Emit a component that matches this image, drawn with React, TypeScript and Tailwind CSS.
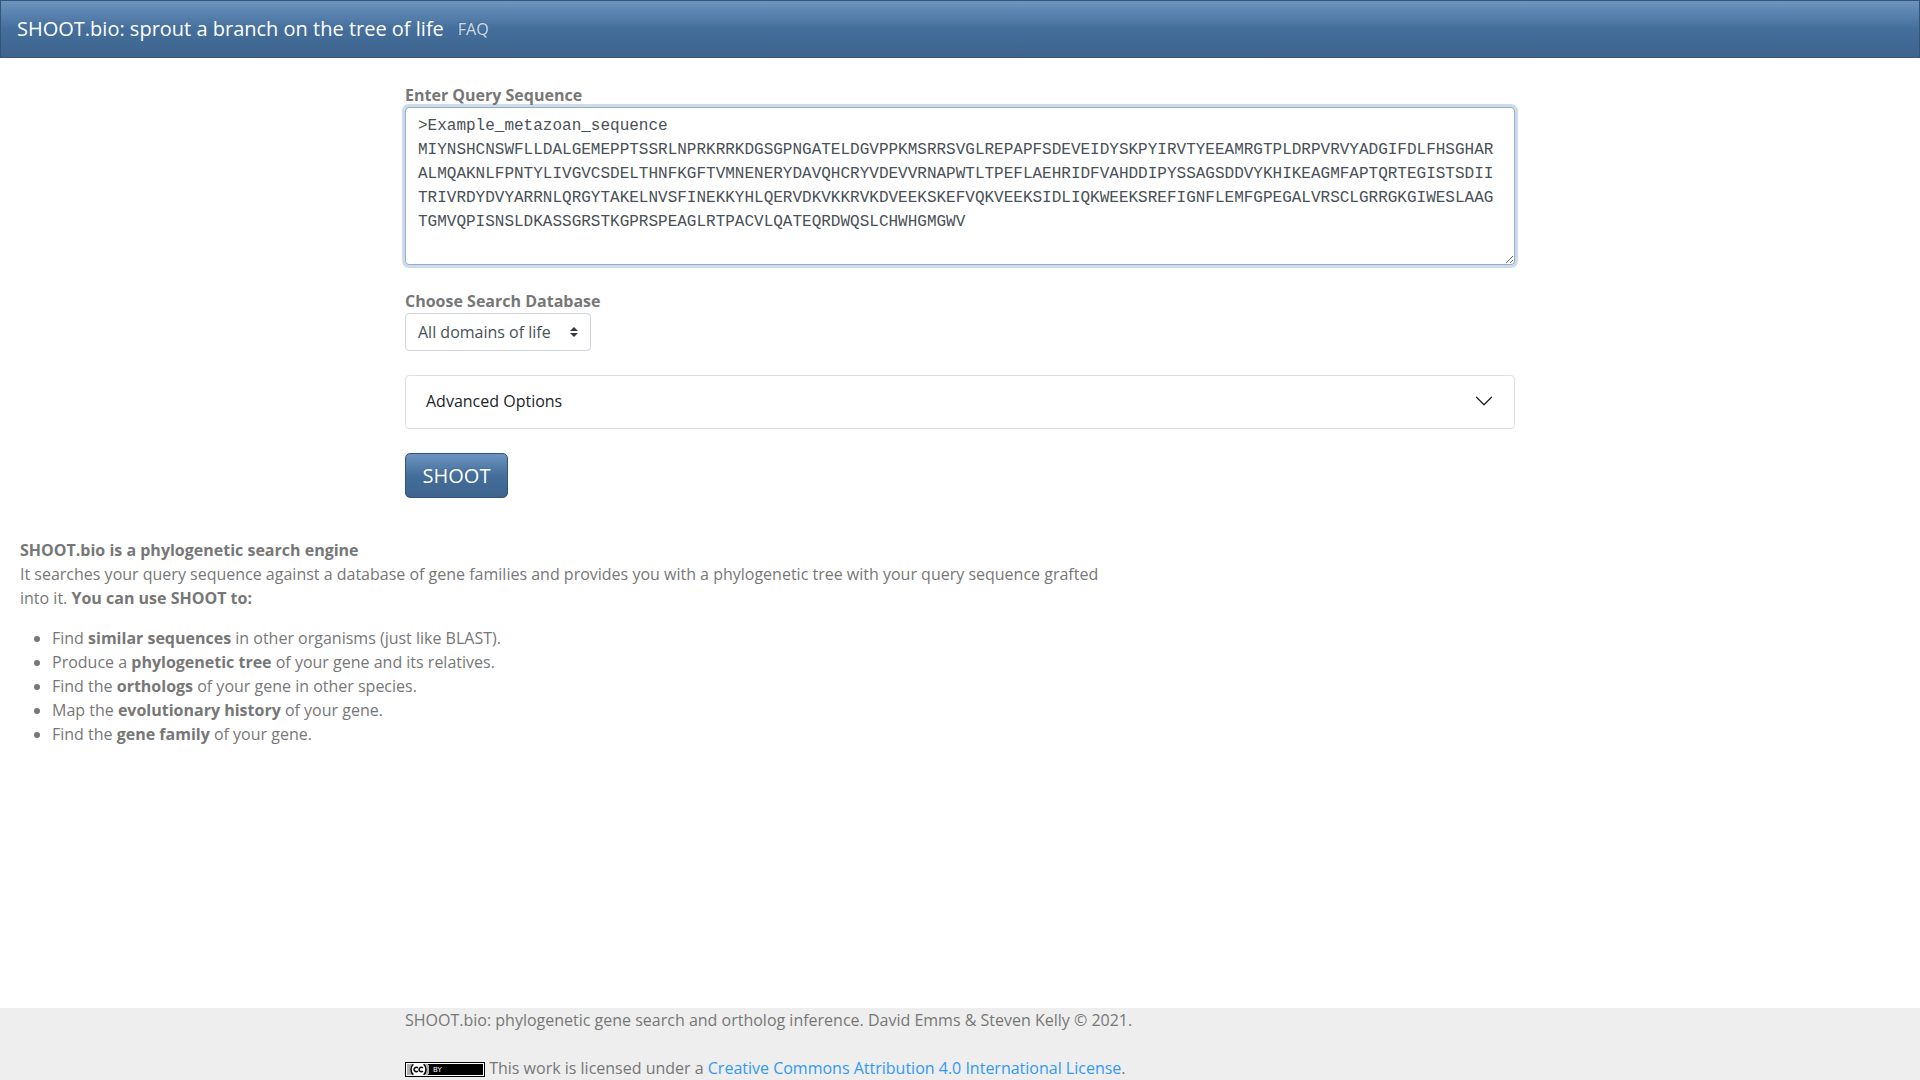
import React, { useState } from "react";

const EXAMPLE_SEQUENCE = `>Example_metazoan_sequence
MIYNSHCNSWFLLDALGEMEPPTSSRLNPRKRRKDGSGPNGATELDGVPPKMSRRSVGLREPAPFSDEVEIDYSKPYIRVTYEEAMRGTPLDRPVRVYADGIFDLFHSGHAR
ALMQAKNLFPNTYLIVGVCSDELTHNFKGFTVMNENERYDAVQHCRYVDEVVRNAPWTLTPEFLAEHRIDFVAHDDIPYSSAGSDDVYKHIKEAGMFAPTQRTEGISTSDII
TRIVRDYDVYARRNLQRGYTAKELNVSFINEKKYHLQERVDKVKKRVKDVEEKSKEFVQKVEEKSIDLIQKWEEKSREFIGNFLEMFGPEGALVRSCLGRRGKGIWESLAAG
TGMVQPISNSLDKASSGRSTKGPRSPEAGLRTPACVLQATEQRDWQSLCHWHGMGWV`;

interface Use {
  before: string;
  term: string;
  after: string;
}

const USES: Use[] = [
  { before: "Find ", term: "similar sequences", after: " in other organisms (just like BLAST)." },
  { before: "Produce a ", term: "phylogenetic tree", after: " of your gene and its relatives." },
  { before: "Find the ", term: "orthologs", after: " of your gene in other species." },
  { before: "Map the ", term: "evolutionary history", after: " of your gene." },
  { before: "Find the ", term: "gene family", after: " of your gene." },
];

const NavBar: React.FC = () => (
  <nav className="flex h-[58px] items-center gap-[14px] border border-[#345578] bg-[linear-gradient(#6d94bf,#446e9b_50%,#3e648d)] px-4">
    <a href="#" className="text-xl leading-[30px] text-white">
      SHOOT.bio: sprout a branch on the tree of life
    </a>
    <a href="#faq" className="text-white/75 [text-shadow:-1px_-1px_0_rgba(0,0,0,0.1)]">
      FAQ
    </a>
  </nav>
);

/** Small 80x15 "CC BY" licence button. */
const LicenceBadge: React.FC = () => (
  <svg
    width="80"
    height="15"
    viewBox="0 0 80 15"
    role="img"
    aria-label="Creative Commons License"
    className="inline-block align-middle"
    shapeRendering="crispEdges"
  >
    <rect width="80" height="15" fill="#000" />
    <rect x="1" y="1" width="78" height="13" fill="#fff" />
    <rect x="2" y="2" width="76" height="11" fill="#000" />
    <path d="M2 2h21q3 5.500 0 11H2z" fill="#aab2ab" />
    <g shapeRendering="auto">
      <path d="M8 2h10a8 8 0 0 1 0 11H8a8 8 0 0 1 0-11z" fill="#fff" />
      <path
        d="M8.300 2.300a7 7 0 0 0 0 10.400M18.700 2.300a7 7 0 0 1 0 10.400"
        fill="none"
        stroke="#000"
        strokeWidth="1.500"
      />
      <path
        d="M12.900 6a2.200 2.200 0 1 0 0 3M17.900 6a2.200 2.200 0 1 0 0 3"
        fill="none"
        stroke="#000"
        strokeWidth="1.500"
      />
    </g>
    <text x="28" y="10" fill="#fff" fontSize="7" fontFamily="DejaVu Sans, sans-serif">
      BY
    </text>
  </svg>
);

const QueryForm: React.FC = () => {
  const [sequence, setSequence] = useState(EXAMPLE_SEQUENCE);
  const [database, setDatabase] = useState("all");
  const [open, setOpen] = useState(false);

  return (
    <form
      className="mx-auto flex w-full max-w-[1140px] flex-col items-start gap-6 px-[15px] pt-[25px]"
      onSubmit={(e) => e.preventDefault()}
    >
      <div className="flex w-full flex-col">
        <label htmlFor="sequence" className="self-start font-bold">
          Enter Query Sequence
        </label>
        <textarea
          id="sequence"
          rows={6}
          spellCheck={false}
          value={sequence}
          onChange={(e) => setSequence(e.target.value)}
          className="w-full resize rounded border border-[#90afd0] bg-white px-3 py-1.5 font-['Liberation_Mono',monospace] text-[#495057] shadow-[0_0_0_3px_rgba(68,110,155,0.25)] outline-none"
        />
      </div>

      <div className="flex flex-col items-start">
        <label htmlFor="database" className="font-bold">
          Choose Search Database
        </label>
        <div className="relative">
          <select
            id="database"
            value={database}
            onChange={(e) => setDatabase(e.target.value)}
            className="h-[38px] w-[186px] appearance-none rounded border border-[#ced4da] bg-white pr-7 pl-3 text-[#495057]"
          >
            <option value="all">All domains of life</option>
          </select>
          <svg
            viewBox="0 0 4 5"
            className="pointer-events-none absolute top-[14px] right-[13px] h-[10px] w-2"
            aria-hidden="true"
          >
            <path fill="#343a40" d="M2 0L0 2h4zm0 5L0 3h4z" />
          </svg>
        </div>
      </div>

      <div className="w-full rounded border border-[#dfdfdf] bg-white">
        <button
          type="button"
          aria-expanded={open}
          onClick={() => setOpen(!open)}
          className="flex w-full items-center justify-between px-5 pt-[13px] pb-[15px] text-left text-[#212529]"
        >
          Advanced Options
          <svg viewBox="0 0 16 16" className="size-5" fill="#212529" aria-hidden="true">
            <path
              fillRule="evenodd"
              d="M1.646 4.646a.5.5 0 0 1 .708 0L8 10.293l5.646-5.647a.5.5 0 0 1 .708.708l-6 6a.5.5 0 0 1-.708 0l-6-6a.5.5 0 0 1 0-.708z"
            />
          </svg>
        </button>
      </div>

      <button
        type="submit"
        className="h-[45px] min-w-[103px] rounded-[5px] border border-[#345578] bg-[linear-gradient(#6d94bf,#446e9b_50%,#3e648d)] px-4 pt-px text-xl text-white [text-shadow:-1px_-1px_0_rgba(0,0,0,0.1)]"
      >
        SHOOT
      </button>
    </form>
  );
};

const About: React.FC = () => (
  <section className="max-w-[1150px] px-5 pt-10">
    <p>
      <strong>SHOOT.bio is a phylogenetic search engine</strong>
      <br />
      It searches your query sequence against a database of gene families and provides you with a
      phylogenetic tree with your query sequence grafted into it.{" "}
      <strong>You can use SHOOT to:</strong>
    </p>
    <ul className="mt-4 list-disc pl-8">
      {USES.map((use) => (
        <li key={use.term}>
          {use.before}
          <strong>{use.term}</strong>
          {use.after}
        </li>
      ))}
    </ul>
  </section>
);

const Footer: React.FC = () => (
  <footer className="mt-auto bg-[#eee]">
    <div className="mx-auto flex max-w-[1140px] flex-col gap-6 px-[15px]">
      <p>SHOOT.bio: phylogenetic gene search and ortholog inference. David Emms &amp; Steven Kelly © 2021.</p>
      <p>
        <LicenceBadge /> This work is licensed under a{" "}
        <a href="#license" className="text-[#3399f3]">
          Creative Commons Attribution 4.0 International License
        </a>
        .
      </p>
    </div>
  </footer>
);

export default function App() {
  return (
    <div className="flex min-h-screen flex-col bg-white font-['Open_Sans',sans-serif] text-base leading-6 text-[#777]">
      <NavBar />
      <main>
        <QueryForm />
        <About />
      </main>
      <Footer />
    </div>
  );
}
